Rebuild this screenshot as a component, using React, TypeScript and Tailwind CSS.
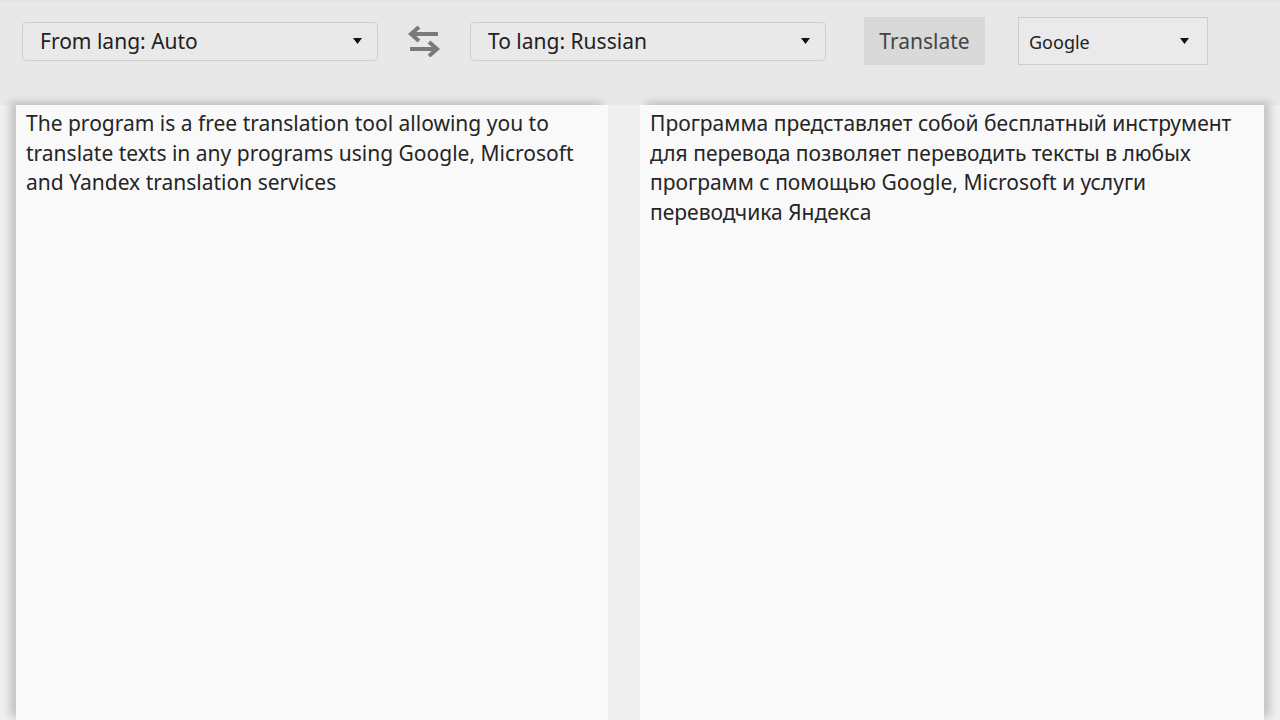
import { useState } from "react";

const font = { fontFamily: '"Noto Sans", "Open Sans", sans-serif' };

const SwapIcon = () => (
  <svg width="34" height="32" viewBox="0 0 34 32" fill="none">
    {/* top arrow, pointing left */}
    <path d="M31 9 H6" stroke="#7a7a7a" strokeWidth="4" />
    <path d="M12 2 L4 9 L12 16" stroke="#7a7a7a" strokeWidth="4" strokeLinejoin="miter" />
    {/* bottom arrow, pointing right */}
    <path d="M3 24 H28" stroke="#7a7a7a" strokeWidth="4" />
    <path d="M22 17 L30 24 L22 31" stroke="#7a7a7a" strokeWidth="4" strokeLinejoin="miter" />
  </svg>
);

const Caret = () => (
  <svg width="9" height="6" viewBox="0 0 9 6">
    <path d="M0 0 H9 L4.5 6 Z" fill="#111" />
  </svg>
);

const LangSelect = ({ label }: { label: string }) => (
  <div className="w-[356px] h-[39px] flex items-center justify-between pl-[17px] pr-[15px] rounded-[4px] border border-[#cfcfcf] bg-[#e9e9e9] text-[21px] text-[#222]">
    <span className="pt-[2px]">{label}</span>
    <Caret />
  </div>
);

export default function App() {
  const [source] = useState(
    "The program is a free translation tool allowing you to translate texts in any programs using Google, Microsoft and Yandex translation services"
  );
  const [result] = useState(
    "Программа представляет собой бесплатный инструмент для перевода позволяет переводить тексты в любых программ с помощью Google, Microsoft и услуги переводчика Яндекса"
  );

  return (
    <div className="w-[1280px] h-[720px] overflow-hidden bg-[#e8e8e8] flex flex-col border-t-2 border-[#dde4ec]" style={font}>
      {/* toolbar */}
      <div className="h-[48px] mt-[15px] flex items-center pl-[22px]">
        <LangSelect label="From lang: Auto" />
        <div className="w-[92px] flex justify-center">
          <SwapIcon />
        </div>
        <LangSelect label="To lang: Russian" />
        <button className="ml-[38px] w-[121px] h-[48px] pt-[2px] bg-[#d9d9d9] text-[21px] text-[#444]">
          Translate
        </button>
        <div className="ml-[33px] w-[190px] h-[48px] flex items-center justify-between pl-[10px] pr-[18px] border border-[#cdcdcd] bg-[#eaeaea] text-[18px] text-[#222]">
          <span className="pt-[2px]">Google</span>
          <Caret />
        </div>
      </div>

      {/* text panels */}
      <div className="flex-1 mt-[40px] flex bg-[#efefef]">
        <div className="ml-[16px] w-[592px] bg-[#f9f9f9] shadow-[-6px_-3px_8px_rgba(0,0,0,0.18)] px-[10px] pt-[4px] text-[21px] leading-[29.6px] text-[#252525]">
          {source}
        </div>
        <div className="ml-[32px] w-[624px] bg-[#f9f9f9] shadow-[6px_-3px_8px_rgba(0,0,0,0.18)] px-[10px] pt-[4px] text-[21px] leading-[29.6px] text-[#252525]">
          {result}
        </div>
      </div>
    </div>
  );
}
